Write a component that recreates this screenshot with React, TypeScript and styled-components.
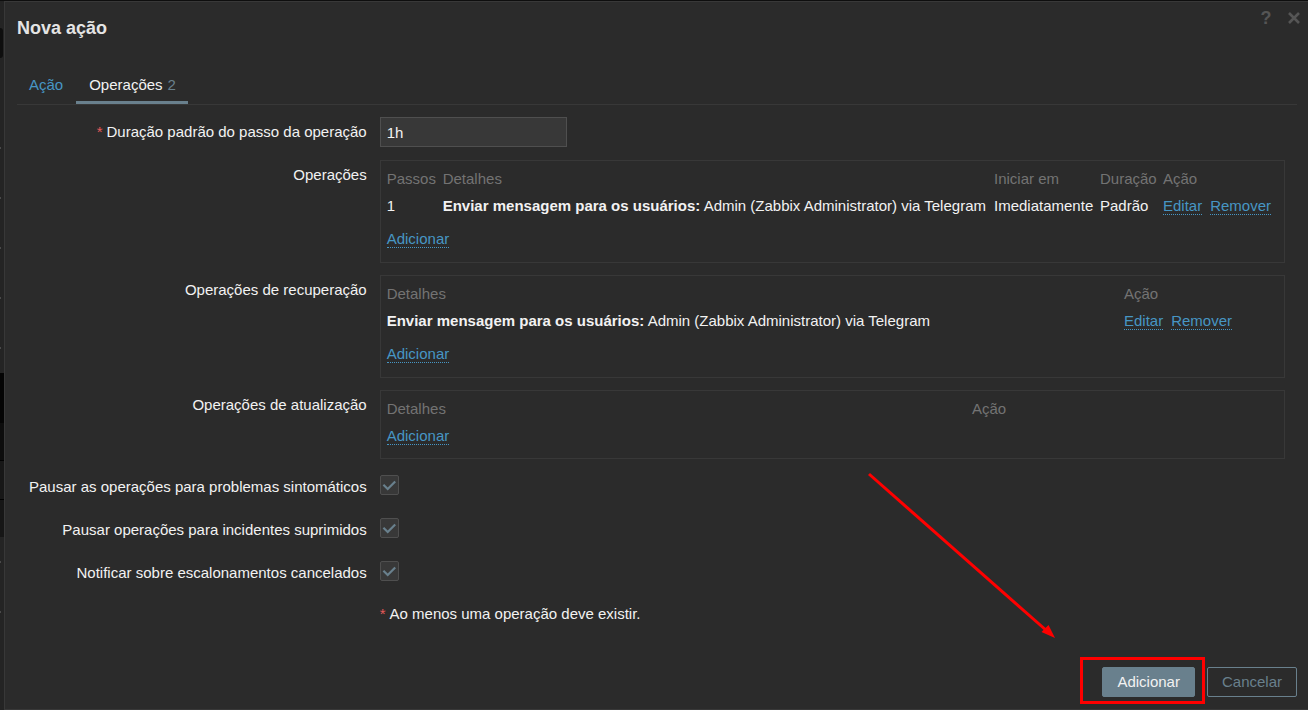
import React, { useState } from 'react';
import styled, { createGlobalStyle, css } from 'styled-components';

const c = {
  panel: '#2b2b2b',
  line: '#383838',
  field: '#383838',
  fieldLine: '#4f4f4f',
  text: '#f2f2f2',
  muted: '#737373',
  link: '#4796c4',
  accent: '#69808d',
  required: '#e45959',
  mark: '#ff0000',
};

const GlobalStyle = createGlobalStyle`
  * { box-sizing: border-box; }
  body {
    margin: 0;
    background: #242424;
    color: ${c.text};
    font: 15px/18px Arial, "Liberation Sans", sans-serif;
  }
  button, input { font: inherit; }
`;

const Page = styled.div`
  display: flex;
  min-height: 100vh;
  padding-top: 1px;
  background: linear-gradient(to bottom, #0e0e0e 1px, transparent 1px);
`;

const dot = (y: number) => `linear-gradient(#4a4a4a, #4a4a4a) 0 ${y}px / 1px 2px no-repeat`;

const Sidebar = styled.div`
  flex: 0 0 4px;
  background:
    ${[146, 196, 246, 296, 346, 560, 610].map(dot).join(',')},
    linear-gradient(
      to bottom,
      #242424 372px, #040404 372px, #040404 422px,
      #0d0d0d 422px, #0d0d0d 459px, #000 459px, #000 460px,
      #171717 460px, #171717 498px, #000 498px, #000 499px,
      #161616 499px, #161616 536px, #242424 536px
    );
`;

const SidebarItem = styled.div`
  height: 30px;
  width: 3px;
  margin-top: 27px;
  border-radius: 0 3px 3px 0;
  background: #0e0e0e;
`;

const Dialog = styled.main`
  position: relative;
  flex: 1;
  min-width: 0;
  display: flex;
  flex-direction: column;
  background: ${c.panel};
  border: 1px solid ${c.line};
  border-right: 0;
`;

const Header = styled.header`
  display: flex;
  justify-content: space-between;
  align-items: flex-start;
  height: 68px;
  padding: 6px 8px 0 12px;
`;

const Title = styled.h1`
  margin: 8px 0 0;
  font-size: 18px;
  line-height: 24px;
  color: #e4e4e4;
`;

const HeaderTools = styled.div`
  display: flex;
  gap: 16px;
  color: #555;
`;

const IconButton = styled.button`
  display: flex;
  align-items: center;
  justify-content: center;
  width: 12px;
  height: 20px;
  padding: 0;
  border: 0;
  background: none;
  color: inherit;
  font-size: 18px;
  font-weight: bold;
  cursor: pointer;
`;

const Tabs = styled.nav`
  display: flex;
  margin: 0 11px 0 12px;
  border-bottom: 1px solid ${c.line};
`;

const Tab = styled.a<{ $active?: boolean }>`
  display: flex;
  gap: 5px;
  height: 34px;
  padding: 6px 13px 0 12px;
  line-height: 18px;
  color: ${c.link};
  text-decoration: none;
  ${(p) => p.$active && css`
    padding: 6px 12px 0 13px;
    color: ${c.text};
    border-bottom: 3px solid ${c.accent};
  `}
`;

const TabCount = styled.span`
  color: ${c.accent};
`;

const Form = styled.form`
  flex: 1;
  display: flex;
  flex-direction: column;
`;

const Fields = styled.div`
  display: grid;
  grid-template-columns: max-content minmax(0, 1fr);
  gap: 12px 13px;
  padding: 12px 23px 12px 24px;
`;

const Label = styled.label`
  line-height: 30px;
  text-align: right;
`;

const CheckLabel = styled(Label)`
  line-height: 31px;
`;

const Required = styled.span`
  margin-right: 4px;
  color: ${c.required};
`;

const InputCell = styled.div`
  height: 31px;
`;

const TextInput = styled.input`
  width: 187px;
  height: 30px;
  padding: 0 6px;
  border: 1px solid ${c.fieldLine};
  background: ${c.field};
  color: ${c.text};
`;

const TableBox = styled.div`
  padding: 4px 6px 9px;
  border: 1px solid ${c.line};
`;

const Table = styled.table`
  width: 100%;
  table-layout: fixed;
  border-collapse: collapse;
  white-space: nowrap;
`;

const Th = styled.th<{ $width?: number }>`
  width: ${(p) => (p.$width ? `${p.$width}px` : 'auto')};
  height: 27px;
  padding: 0;
  font-weight: normal;
  text-align: left;
  color: ${c.muted};
`;

const Td = styled.td<{ $spaced?: boolean }>`
  height: ${(p) => (p.$spaced ? 34 : 27)}px;
  padding: ${(p) => (p.$spaced ? 6 : 0)}px 0 0;
`;

const Actions = styled.div`
  display: flex;
  gap: 8px;
`;

const LinkButton = styled.button`
  display: block;
  height: 18px;
  padding: 0;
  border: 0;
  border-bottom: 1px dotted ${c.link};
  background: none;
  color: ${c.link};
  line-height: 17px;
  cursor: pointer;
`;

const CheckCell = styled.div`
  display: flex;
  align-items: center;
  height: 31px;
  padding-bottom: 3px;
`;

const CheckFrame = styled.span`
  position: relative;
  display: flex;

  svg {
    position: absolute;
    inset: 0;
    pointer-events: none;
  }
`;

const CheckInput = styled.input`
  appearance: none;
  width: 19px;
  height: 20px;
  margin: 0;
  border: 1px solid ${c.fieldLine};
  border-radius: 2px;
  background: ${c.field};
`;

const Note = styled.p`
  grid-column: 2;
  margin: 0;
  line-height: 28px;
`;

const Footer = styled.footer`
  display: flex;
  justify-content: flex-end;
  gap: 12px;
  margin-top: auto;
  padding: 0 11px 12px;
`;

const Button = styled.button<{ $outline?: boolean }>`
  height: 30px;
  padding: 0 14px;
  border: 1px solid ${c.accent};
  border-radius: 2px;
  background: ${(p) => (p.$outline ? 'transparent' : c.accent)};
  color: ${(p) => (p.$outline ? c.accent : c.text)};
  cursor: pointer;
`;

const Annotation = styled.svg`
  position: absolute;
  right: 103px;
  bottom: 5px;
  pointer-events: none;
`;

type Column = { title: string; width?: number };

function OperationTable({ columns, cells }: { columns: Column[]; cells?: React.ReactNode[] }) {
  return (
    <TableBox>
      <Table>
        <thead>
          <tr>{columns.map((col) => <Th key={col.title} $width={col.width}>{col.title}</Th>)}</tr>
        </thead>
        <tbody>
          {cells && (
            <tr>
              {cells.map((cell, i) => <Td key={i}>{cell}</Td>)}
              <Td>
                <Actions>
                  <LinkButton type="button">Editar</LinkButton>
                  <LinkButton type="button">Remover</LinkButton>
                </Actions>
              </Td>
            </tr>
          )}
          <tr>
            <Td colSpan={columns.length} $spaced={!!cells}>
              <LinkButton type="button">Adicionar</LinkButton>
            </Td>
          </tr>
        </tbody>
      </Table>
    </TableBox>
  );
}

function CheckField({ id, label }: { id: string; label: string }) {
  const [checked, setChecked] = useState(true);
  return (
    <>
      <CheckLabel htmlFor={id}>{label}</CheckLabel>
      <CheckCell>
        <CheckFrame>
          <CheckInput id={id} type="checkbox" checked={checked} onChange={(e) => setChecked(e.target.checked)} />
          {checked && (
            <svg width="19" height="20" viewBox="0 0 19 20" fill="none" stroke={c.accent} strokeWidth="2.2">
              <path d="M3.4 9.8 L7.7 14 L15.2 6.5" />
            </svg>
          )}
        </CheckFrame>
      </CheckCell>
    </>
  );
}

const message = (
  <>
    <b>Enviar mensagem para os usuários:</b> Admin (Zabbix Administrator) via Telegram
  </>
);

export default function App() {
  return (
    <>
      <GlobalStyle />
      <Page>
        <Sidebar>
          <SidebarItem />
        </Sidebar>
        <Dialog>
          <Header>
            <Title>Nova ação</Title>
            <HeaderTools>
              <IconButton type="button" aria-label="Ajuda">?</IconButton>
              <IconButton type="button" aria-label="Fechar">
                <svg width="12" height="12" viewBox="0 0 12 12" stroke="currentColor" strokeWidth="2.6">
                  <path d="M1 1 L11 11 M11 1 L1 11" />
                </svg>
              </IconButton>
            </HeaderTools>
          </Header>
          <Tabs>
            <Tab href="#acao">Ação</Tab>
            <Tab href="#operacoes" $active>
              Operações <TabCount>2</TabCount>
            </Tab>
          </Tabs>
          <Form onSubmit={(e) => e.preventDefault()}>
            <Fields>
              <Label htmlFor="duration"><Required>*</Required>Duração padrão do passo da operação</Label>
              <InputCell>
                <TextInput id="duration" type="text" defaultValue="1h" />
              </InputCell>

              <Label as="span">Operações</Label>
              <OperationTable
                columns={[
                  { title: 'Passos', width: 56 },
                  { title: 'Detalhes' },
                  { title: 'Iniciar em', width: 106 },
                  { title: 'Duração', width: 63 },
                  { title: 'Ação', width: 115 },
                ]}
                cells={['1', message, 'Imediatamente', 'Padrão']}
              />

              <Label as="span">Operações de recuperação</Label>
              <OperationTable columns={[{ title: 'Detalhes' }, { title: 'Ação', width: 154 }]} cells={[message]} />

              <Label as="span">Operações de atualização</Label>
              <OperationTable columns={[{ title: 'Detalhes' }, { title: 'Ação', width: 306 }]} />

              <CheckField id="pause-symptoms" label="Pausar as operações para problemas sintomáticos" />
              <CheckField id="pause-suppressed" label="Pausar operações para incidentes suprimidos" />
              <CheckField id="notify-canceled" label="Notificar sobre escalonamentos cancelados" />

              <Note><Required>*</Required>Ao menos uma operação deve existir.</Note>
            </Fields>
            <Footer>
              <Button type="submit">Adicionar</Button>
              <Button type="button" $outline>Cancelar</Button>
            </Footer>
          </Form>
          <Annotation width="338" height="232" viewBox="0 0 338 232" fill="none" stroke={c.mark} strokeWidth="3" aria-hidden="true">
            <rect x="214.5" y="186.5" width="122" height="44" />
            <path d="M2 2 L180 159" />
            <path d="M188 166 L174.5 160 L181.5 153 Z" fill={c.mark} stroke="none" />
          </Annotation>
        </Dialog>
      </Page>
    </>
  );
}
